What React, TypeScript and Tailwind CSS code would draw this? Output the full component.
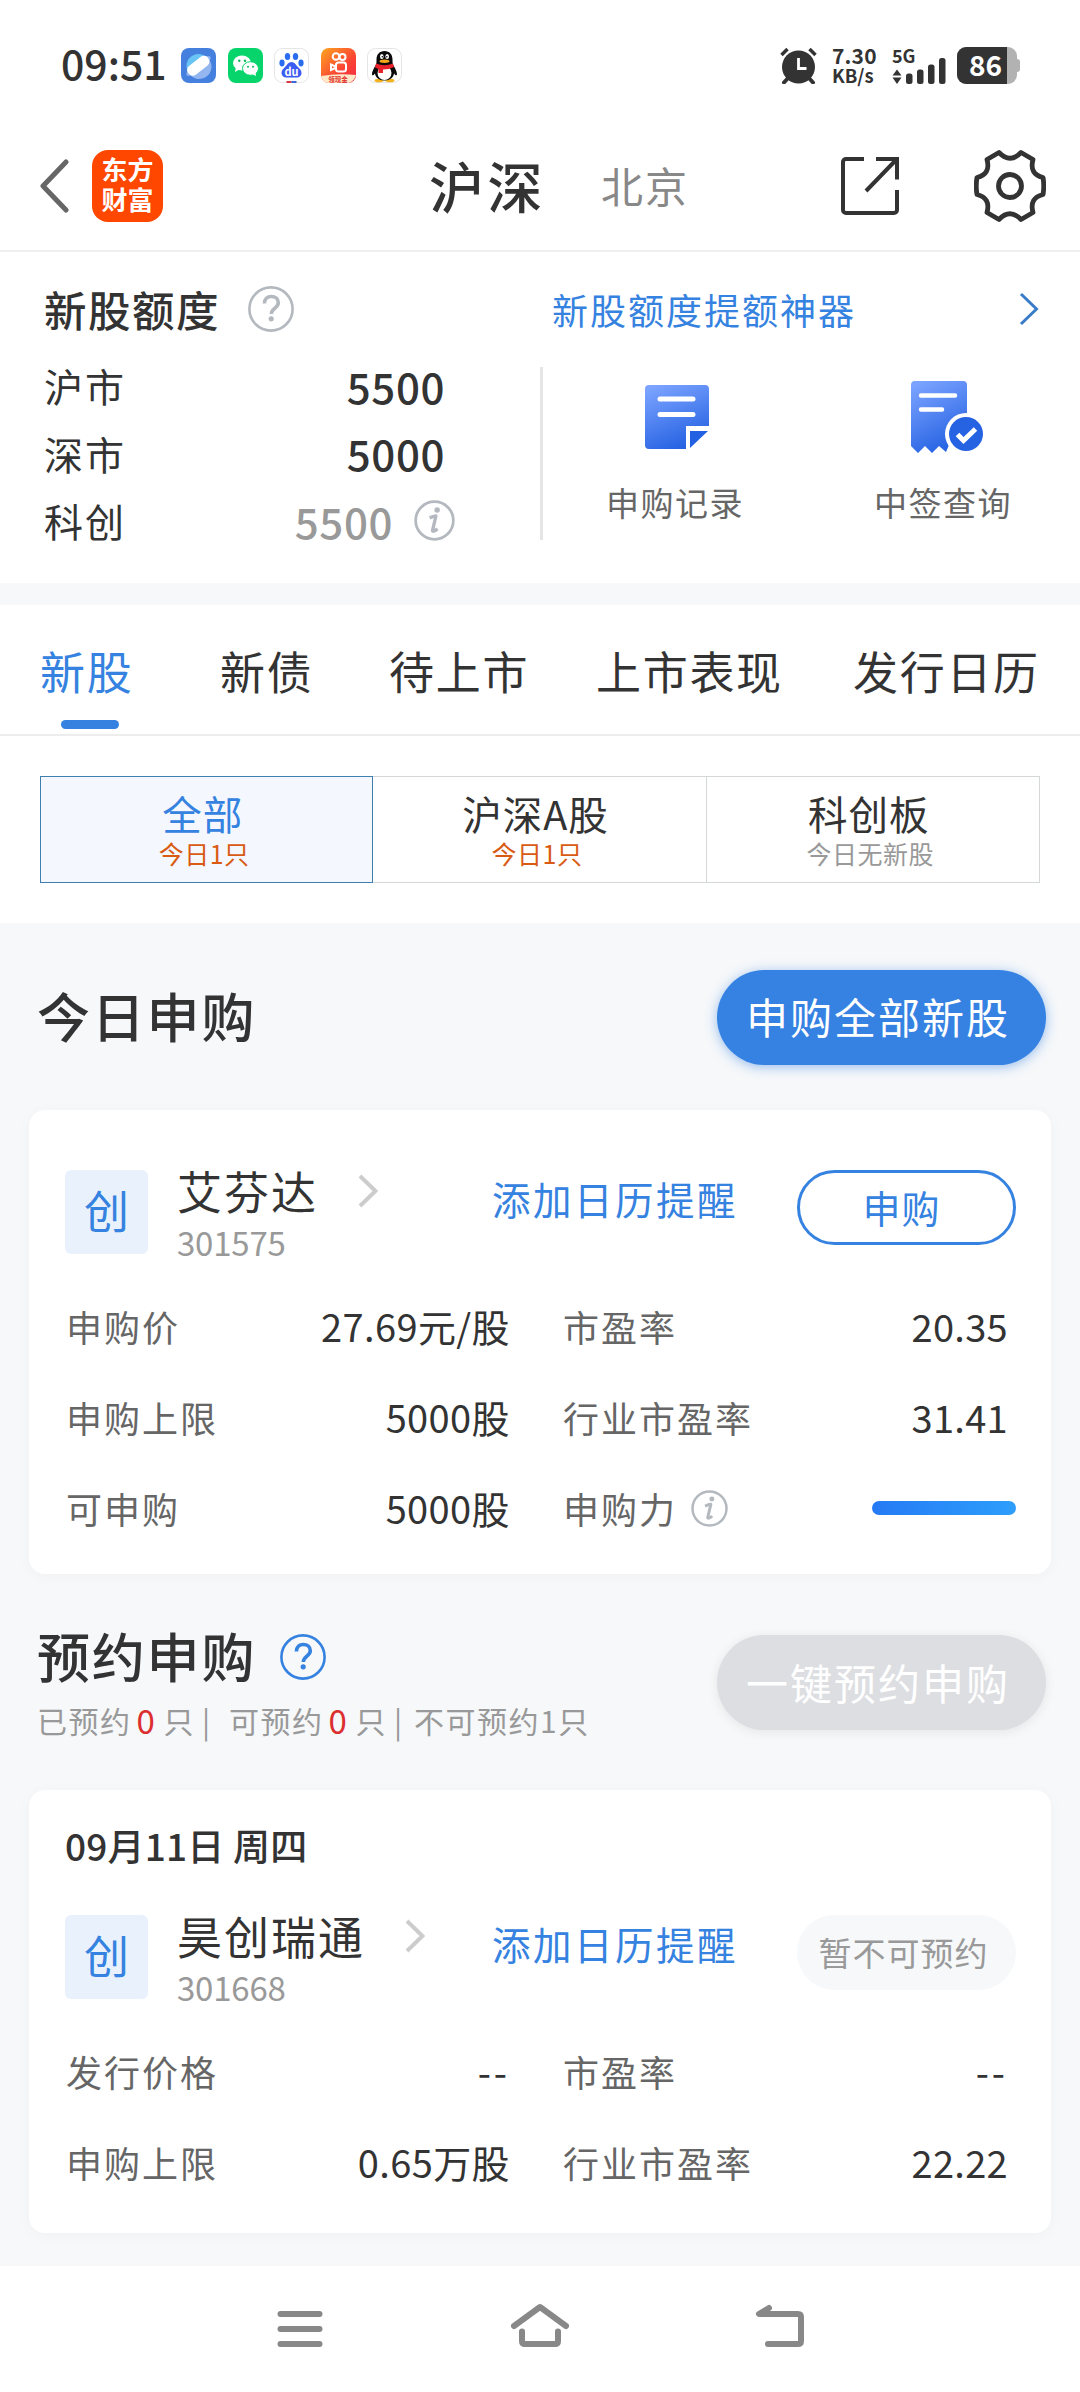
import type { ReactNode } from "react";

type Row = {
  label: string;
  value?: string;
  info?: boolean;
  power?: boolean;
};

const tabs = [
  { name: "新股", pos: "ml-[40px] w-[180px]" },
  { name: "新债", pos: "w-[169px]" },
  { name: "待上市", pos: "w-[207px]" },
  { name: "上市表现", pos: "w-[257px]" },
  { name: "发行日历", pos: "" },
];

const filters = [
  { name: "全部", note: "今日1只", active: true, hot: true },
  { name: "沪深A股", note: "今日1只", active: false, hot: true },
  { name: "科创板", note: "今日无新股", active: false, hot: false },
];

const todayRows: [Row, Row][] = [
  [{ label: "申购价", value: "27.69元/股" }, { label: "市盈率", value: "20.35" }],
  [{ label: "申购上限", value: "5000股" }, { label: "行业市盈率", value: "31.41" }],
  [{ label: "可申购", value: "5000股" }, { label: "申购力", info: true, power: true }],
];

const reserveRows: [Row, Row][] = [
  [{ label: "发行价格", value: "--" }, { label: "市盈率", value: "--" }],
  [{ label: "申购上限", value: "0.65万股" }, { label: "行业市盈率", value: "22.22" }],
];

const InfoIcon = ({ className }: { className: string }) => (
  <svg viewBox="0 0 42 42" className={className} fill="none">
    <circle cx="21" cy="21" r="19.3" stroke="#b4b8bf" strokeWidth="2.8" />
    <circle cx="23.7" cy="10.3" r="2.8" fill="#b4b8bf" />
    <path
      d="M16 18.300c2.500-1 4.500-2 6.500-2L19 31c-.300 1.500 2 1.500 5-1.500"
      stroke="#b4b8bf"
      strokeWidth="3.4"
      strokeLinejoin="round"
    />
  </svg>
);

const HelpIcon = ({ className }: { className: string }) => (
  <svg viewBox="0 0 46 46" className={className} fill="none" stroke="currentColor">
    <circle cx="23" cy="23" r="21.6" strokeWidth="2.6" />
    <path d="M16.4 17.5c0-4.700 2.900-7 6.900-7s7 2.400 7 6.200c0 5.200-7 5.600-7 11.300" strokeWidth="3.6" />
    <circle cx="23.2" cy="32.8" r="2.6" fill="currentColor" stroke="none" />
  </svg>
);

const Chevron = ({ className, width }: { className: string; width: number }) => (
  <svg viewBox="0 0 20 34" className={className} fill="none" stroke="currentColor" strokeWidth={width}>
    <path d="M2 2l15.5 15L2 32" />
  </svg>
);

const AppIcons = () => (
  <div className="ml-[18px] mt-px flex gap-[11.5px]">
    <svg viewBox="0 0 35 35" className="size-[35px]">
      <rect width="35" height="35" rx="8" fill="#4580df" />
      <circle cx="17.5" cy="18" r="12" fill="#69c4f6" />
      <path d="M7.500 24.500a12 12 0 0 0 21.500-11.500z" fill="#94b6f0" />
      <ellipse cx="17.5" cy="18" rx="15" ry="4.5" transform="rotate(-38 17.5 18)" fill="#8eb3f0" />
      <rect x="4.8" y="12.2" width="25" height="11" rx="5" transform="rotate(-38 17.3 17.7)" fill="#fff" />
    </svg>
    <svg viewBox="0 0 35 35" className="size-[35px]">
      <rect width="35" height="35" rx="8" fill="#07d56b" />
      <path d="M8 19l-1 5 5-3z" fill="#fff" />
      <ellipse cx="14" cy="15" rx="9" ry="7.5" fill="#fff" />
      <ellipse cx="22.5" cy="20.5" rx="8" ry="6.8" fill="#fff" stroke="#07d56b" />
      <path d="M24 26l4 2-.5-4z" fill="#fff" />
      <g fill="#08b65c">
        <circle cx="11.3" cy="12.8" r="1.2" />
        <circle cx="17" cy="12.8" r="1.2" />
        <circle cx="20" cy="18.8" r="1" />
        <circle cx="25" cy="18.8" r="1" />
      </g>
    </svg>
    <svg viewBox="0 0 35 35" className="size-[35px]">
      <rect x=".5" y=".5" width="34" height="34" rx="8" fill="#fff" stroke="#e4e4e4" />
      <g fill="#2a6cf0">
        <ellipse cx="8" cy="15" rx="2.6" ry="3.4" />
        <ellipse cx="13.5" cy="8.5" rx="2.7" ry="3.5" />
        <ellipse cx="21.5" cy="8.5" rx="2.7" ry="3.5" />
        <ellipse cx="27" cy="15" rx="2.6" ry="3.4" />
        <path d="M17.5 14c3 0 4.500 3 6.500 5s3.500 3.500 3.500 6-2 4.500-5 4.500h-10c-3 0-5-2-5-4.500s1.500-4 3.500-6 3.500-5 6.500-5z" fill="#3b5cf0" />
      </g>
      <text x="17.5" y="27.5" textAnchor="middle" fontSize="11" fontWeight="700" fill="#fff">du</text>
      <path d="M12.500 33h5v2h-5z" fill="#d33b40" />
      <path d="M17.500 33h5v2h-5z" fill="#3c66d8" />
    </svg>
    <svg viewBox="0 0 35 35" className="size-[35px]">
      <defs>
        <linearGradient id="ks" x1="0" y1="0" x2="1" y2="1">
          <stop offset="0" stopColor="#ffa51f" />
          <stop offset=".6" stopColor="#fb4434" />
          <stop offset="1" stopColor="#f22b45" />
        </linearGradient>
        <clipPath id="ksClip">
          <rect width="35" height="35" rx="8" />
        </clipPath>
      </defs>
      <g clipPath="url(#ksClip)">
        <rect width="35" height="35" fill="url(#ks)" />
        <g fill="none" stroke="#fff" strokeWidth="2">
          <circle cx="15" cy="8.5" r="3.3" />
          <circle cx="21.5" cy="9" r="3" />
          <rect x="15" y="14.5" width="10" height="9" rx="2.5" />
          <path d="M14.500 18.500l-4.500-2v5.500l4.500-2z" />
        </g>
        <path d="M0 28q17-3 35-1-1 5-7 8H0z" fill="#ffe9c9" />
        <text x="17" y="33.5" textAnchor="middle" fontSize="6.5" fontWeight="700" fill="#e0312b">领现金</text>
      </g>
    </svg>
    <svg viewBox="0 0 35 35" className="size-[35px]">
      <rect x=".5" y=".5" width="34" height="34" rx="8" fill="#fff" stroke="#e4e4e4" />
      <ellipse cx="12" cy="32.5" rx="4.5" ry="1.8" fill="#f5b31b" />
      <ellipse cx="23" cy="32.5" rx="4.5" ry="1.8" fill="#f5b31b" />
      <path
        d="M17.500 3c5 0 8 3.500 8 8.500 0 3 0 4 1 6 2 3.500 4 7 3.300 9.500-.600 1-2-.500-2.800-1.500-.500 4-4 7-9.500 7s-9-3-9.500-7c-.800 1-2.200 2.500-2.800 1.500-.700-2.500 1.300-6 3.300-9.500 1-2 1-3 1-6 0-5 3-8.500 8-8.500z"
        fill="#0a0a0a"
      />
      <ellipse cx="17.5" cy="25" rx="7" ry="7" fill="#fff" />
      <path d="M9 15.500q8.500 3.500 17 0l1 3.500q-5 2.500-11 2.500v3.500h-4.500V21l-3.500-1.500z" fill="#e8212b" />
      <ellipse cx="14.8" cy="8.5" rx="1.8" ry="2.6" fill="#fff" />
      <ellipse cx="20.2" cy="8.5" rx="1.8" ry="2.6" fill="#fff" />
      <circle cx="15.3" cy="8.8" r=".8" />
      <circle cx="19.8" cy="8.8" r=".8" />
      <ellipse cx="17.5" cy="13.3" rx="5" ry="1.7" fill="#f5a61b" />
    </svg>
  </div>
);

const StatusBar = () => (
  <div className="flex h-[121px] items-start pt-[47px] text-[#333]">
    <span className="ml-[61px] -mt-px w-[102px] text-[41px] leading-[32px] font-medium">09:51</span>
    <AppIcons />
    <svg viewBox="0 0 37 37" className="ml-[378px] size-[37px]">
      <path d="M1.500 8l6-6M35.500 8l-6-6" stroke="#333" strokeWidth="3.5" />
      <path d="M9 30l-5 5.500M28 30l5 5.500" stroke="#333" strokeWidth="4" strokeLinecap="round" />
      <circle cx="18.5" cy="20" r="16.5" fill="#333" />
      <path d="M18.500 11v10.500h8" fill="none" stroke="#fff" strokeWidth="2.8" />
    </svg>
    <div className="ml-[15px] -mt-[2px] w-[60px] font-bold">
      <div className="text-[21px] leading-[20px] tracking-[0.2px]">7.30</div>
      <div className="text-[18.5px] leading-[20px]">KB/s</div>
    </div>
    <div className="w-[65px]">
      <div className="-mt-px text-[18px] leading-[18px] font-bold">5G</div>
      <svg viewBox="0 0 55 26" className="-mt-[6px] h-[26px] w-[55px]" fill="#333">
        <path d="M5 11.500l4.500 6h-9zM5 26l4.500-6.500h-9z" />
        <rect x="14" y="15.5" width="6.5" height="10.5" rx="2.5" />
        <rect x="25" y="11.5" width="6.500" height="14.5" rx="2.5" />
        <rect x="36" y="6.5" width="6.5" height="19.5" rx="2.5" />
        <rect x="47" y="0" width="6.5" height="26" rx="2.5" />
      </svg>
    </div>
    <div className="flex items-center">
      <div className="flex h-[37px] w-[60px] rounded-[9px] bg-[#b2b2b2]">
        <div className="w-[50px] rounded-l-[9px] bg-[#333] pl-[12px] text-[28px] leading-[34px] font-bold text-white">86</div>
      </div>
      <div className="h-[13px] w-[3px] rounded-r-sm bg-[#b2b2b2]" />
    </div>
  </div>
);

const Header = () => (
  <div className="flex h-[131px] items-center border-b-2 border-[#efefef]">
    <svg
      viewBox="0 0 30 54"
      className="ml-[39px] h-[54px] w-[30px]"
      fill="none"
      stroke="#666"
      strokeWidth="5"
      strokeLinecap="round"
      strokeLinejoin="round"
    >
      <path d="M27 3L4 27l23 24" />
    </svg>
    <div className="ml-[23px] h-[72px] w-[71px] rounded-[16px] bg-[#ff4700] pt-[4px] text-center text-[26px] leading-[30px] font-bold text-white">
      东方
      <br />
      财富
    </div>
    <div className="ml-[266px] -mt-[4px] w-[172px] text-[55px] leading-[60px] font-medium tracking-[3.5px]">沪深</div>
    <div className="-mt-px w-[240px] text-[42px] leading-[50px] tracking-[2px] text-[#888]">北京</div>
    <svg viewBox="0 0 58 58" className="size-[58px] shrink-0" fill="none" stroke="#333" strokeWidth="4">
      <path d="M23 2H5a3 3 0 0 0-3 3v48a3 3 0 0 0 3 3h48a3 3 0 0 0 3-3V33M35 2h21v20.500M55 3L25 34" />
    </svg>
    <svg
      viewBox="-36 -36 72 72"
      className="ml-[75px] size-[72px] shrink-0"
      fill="none"
      stroke="#333"
      strokeWidth="4.8"
      strokeLinejoin="round"
    >
      <path d="M-11-33.500Q0-22 11-33.500L23-26.500Q19-12 33-8.500Q34.500 0 33 8.500Q19 12 23 26.500L11 33.500Q0 22-11 33.500L-23 26.500Q-19 12-33 8.500Q-34.500 0-33-8.500Q-19-12-23-26.500Z" />
      <circle r="11.500" />
    </svg>
  </div>
);

const QuotaRow = ({ name, children }: { name: string; children: ReactNode }) => (
  <div className="flex h-[67.5px] items-center text-[39px]">
    <span className="tracking-[2px]">{name}</span>
    {children}
  </div>
);

const Quota = () => (
  <div className="h-[331px]">
    <div className="flex h-[99px] items-center pt-[15px]">
      <span className="ml-[44px] w-[204px] text-[42.5px] font-medium tracking-[1.5px]">新股额度</span>
      <HelpIcon className="size-[46px] text-[#b4b8bf]" />
      <span className="ml-[258px] w-[467px] text-[36px] tracking-[2px] text-[#3582e0]">新股额度提额神器</span>
      <Chevron width={3} className="h-[34px] w-[20px] text-[#3a7cc8]" />
    </div>
    <div className="flex">
      <div className="w-[497px] pt-px pl-[44px]">
        <QuotaRow name="沪市">
          <span className="ml-auto mr-[52px] text-[42px] font-medium tracking-[0.6px]">5500</span>
        </QuotaRow>
        <QuotaRow name="深市">
          <span className="ml-auto mr-[52px] text-[42px] font-medium tracking-[0.6px]">5000</span>
        </QuotaRow>
        <QuotaRow name="科创">
          <span className="ml-auto mr-[21px] text-[42px] font-medium tracking-[0.6px] text-[#999]">5500</span>
          <InfoIcon className="mr-[42px] size-[41px]" />
        </QuotaRow>
      </div>
      <div className="ml-[43px] mt-[16px] h-[173px] w-[3px] bg-[#e5e5e5]" />
      <div className="flex pt-[30px] text-[33px] tracking-[1.5px] text-[#666]">
        <div className="ml-[63px] flex w-[268px] flex-col">
          <svg viewBox="0 0 72 72" className="ml-[38px] size-[72px]">
            <defs>
              <linearGradient id="doc" x1=".2" y1="0" x2=".6" y2="1">
                <stop offset="0" stopColor="#7ba3ff" />
                <stop offset="1" stopColor="#2461e2" />
              </linearGradient>
            </defs>
            <path d="M5 4h56a4 4 0 0 1 4 4v37H42v23H5a4 4 0 0 1-4-4V8a4 4 0 0 1 4-4z" fill="url(#doc)" />
            <path d="M46 50h18L46 67z" fill="#2461e2" />
            <path d="M16 18h33M16 33.500h33" stroke="#fff" strokeWidth="5" strokeLinecap="round" />
          </svg>
          <span className="mt-[33px]">申购记录</span>
        </div>
        <div className="flex flex-col">
          <svg viewBox="0 0 74 72" className="ml-[36px] h-[72px] w-[74px]">
            <path d="M4 0h49a4 4 0 0 1 4 4v60H39l-3 7-7-6-7 7-7-7-7 7-7-7V4a4 4 0 0 1 3-4z" fill="url(#doc)" />
            <circle cx="56" cy="53" r="21" fill="#fff" />
            <circle cx="56" cy="53" r="17" fill="#2663e2" />
            <path d="M47.500 53.500l6 6L65.500 48" fill="none" stroke="#fff" strokeWidth="5" />
            <path d="M11 14.500h34M11 28.500h21" stroke="#fff" strokeWidth="4.5" strokeLinecap="round" />
          </svg>
          <span className="mt-[33px]">中签查询</span>
        </div>
      </div>
    </div>
  </div>
);

const StockTitle = ({ name, code, children }: { name: string; code: string; children: ReactNode }) => (
  <div className="flex h-[84px] items-start">
    <div className="h-[84px] w-[83px] rounded-md bg-[#e9f2fc] text-center text-[45px] leading-[80px] text-[#3582e0]">创</div>
    <div className="ml-[29px] w-[315px]">
      <div className="-mt-[2px] flex h-[44px] items-center">
        <span className="mr-[40px] text-[45px] leading-none tracking-[2px]">{name}</span>
        <Chevron width={4} className="mt-[2px] h-[34px] w-[20px] text-[#ccc]" />
      </div>
      <div className="mt-[16px] text-[33px] leading-[28px] tracking-[-0.2px] text-[#999]">{code}</div>
    </div>
    <span className="mt-[8px] w-[305px] text-[38.5px] leading-[40px] tracking-[2.5px] text-[#3582e0]">添加日历提醒</span>
    {children}
  </div>
);

const DataRow = ({ row }: { row: [Row, Row] }) => (
  <div className="flex h-[91px] items-center text-[38px]">
    {row.map((cell, i) => (
      <div key={i} className={i === 0 ? "flex w-[445px] items-center pl-px" : "ml-[53px] flex w-[453px] items-center"}>
        <span className="text-[36px] tracking-[2px] text-[#666]">{cell.label}</span>
        {cell.info && <InfoIcon className="ml-[14px] mt-[2px] size-[37px]" />}
        {cell.power ? (
          <div className="ml-auto h-[14px] w-[144px] rounded-full bg-linear-to-r from-[#267af4] to-[#2e9efc]" />
        ) : (
          <span
            className={`ml-auto ${i === 1 ? "mr-[8px]" : ""} ${
              cell.value === "--" ? "tracking-[3px]" : i === 1 ? "tracking-[0.3px]" : "tracking-[0.4px]"
            }`}
          >
            {cell.value}
          </span>
        )}
      </div>
    ))}
  </div>
);

const NavBar = () => (
  <div className="flex h-[126px] items-start bg-white pt-[37px]">
    <svg viewBox="0 0 48 48" className="ml-[276px] size-[48px]" stroke="#888" strokeWidth="6" strokeLinecap="round">
      <path d="M4.500 11h39M4.500 26h39M4.500 41h39" />
    </svg>
    <svg
      viewBox="0 0 60 48"
      className="ml-[186px] h-[48px] w-[60px]"
      fill="none"
      stroke="#888"
      strokeWidth="6"
      strokeLinecap="round"
      strokeLinejoin="round"
    >
      <path d="M4 23L30 4l26 19M12 28.500V38q0 3 3 3h30q3 0 3-3v-9.500" />
    </svg>
    <svg
      viewBox="0 0 50 48"
      className="ml-[185px] h-[48px] w-[50px]"
      fill="none"
      stroke="#888"
      strokeWidth="6"
      strokeLinecap="round"
      strokeLinejoin="round"
    >
      <path d="M14 5L4 11h39q3 0 3 3v24q0 3-3 3H13" />
    </svg>
  </div>
);

const App = () => (
  <div className="h-[2392px] w-[1080px] overflow-hidden bg-[#f6f8fa] font-['Noto_Sans_CJK_SC',sans-serif] leading-none text-[#333]">
    <div className="h-[583px] bg-white">
      <StatusBar />
      <Header />
      <Quota />
    </div>

    <div className="mt-[22px] h-[318px] bg-white">
      <div className="flex h-[131px] items-start border-b-2 border-[#ededed] pt-[43px] text-[45px] tracking-[1.7px]">
        {tabs.map((tab, i) => (
          <div key={tab.name} className={tab.pos}>
            <div className={i === 0 ? "text-[#3582e0]" : ""}>{tab.name}</div>
            {i === 0 && <div className="ml-[21px] mt-[27px] h-[9px] w-[58px] rounded-full bg-[#3582e0]" />}
          </div>
        ))}
      </div>
      <div className="mx-[40px] mt-[40px] grid h-[107px] grid-cols-3">
        {filters.map((f) => (
          <div
            key={f.name}
            className={`flex flex-col items-center border pt-[16px] ${
              f.active ? "border-[#3f7fb0] bg-[#f4f8fe]" : "border-l-0 border-[#d4d7d7]"
            }`}
          >
            <div className={`pr-[8px] text-[39.5px] tracking-[1px] ${f.active ? "text-[#3582e0]" : ""}`}>{f.name}</div>
            <div className={`mt-[8px] pr-[5px] text-[25px] tracking-[0.5px] ${f.hot ? "text-[#d95b13]" : "text-[#999]"}`}>
              {f.note}
            </div>
          </div>
        ))}
      </div>
    </div>

    <div className="flex h-[187px] items-center pt-px pl-[37px]">
      <span className="w-[680px] pb-[4px] text-[53px] font-medium tracking-[1.8px]">今日申购</span>
      <button className="h-[95px] w-[329px] rounded-full bg-[#3582e3] pr-[7px] pb-[2px] text-[42px] tracking-[2px] text-white shadow-[0_2px_12px_rgba(53,130,227,0.5)]">
        申购全部新股
      </button>
    </div>

    <div className="mx-[29px] h-[464px] rounded-2xl bg-white pt-[60px] pl-[36px] shadow-[0_2px_16px_rgba(0,0,0,0.03)]">
      <StockTitle name="艾芬达" code="301575">
        <button className="h-[75px] w-[219px] rounded-full border-3 border-[#3582e0] pr-[10px] pb-[2px] text-[38px] tracking-[1px] text-[#3582e0]">
          申购
        </button>
      </StockTitle>
      <div className="mt-[26px]">
        {todayRows.map((row) => (
          <DataRow key={row[0].label} row={row} />
        ))}
      </div>
    </div>

    <div className="flex h-[216px] items-start pt-[61px] pl-[37px]">
      <div className="w-[680px]">
        <div className="flex h-[46px] items-center">
          <span className="w-[243px] pb-[5px] text-[53px] font-medium tracking-[1.8px]">预约申购</span>
          <HelpIcon className="-mt-[2px] size-[46px] text-[#3582e0]" />
        </div>
        <div className="mt-[22px] flex h-[34px] items-center text-[30px] tracking-[1.5px] text-[#999]">
          <span>已预约</span>
          <span className="mx-[5px] w-[22px] text-[33px] text-[#dc2f2f]">0</span>
          <span>只</span>
          <span className="ml-[7px] w-[27px]">|</span>
          <span>可预约</span>
          <span className="mx-[5px] w-[22px] text-[33px] text-[#dc2f2f]">0</span>
          <span>只</span>
          <span className="ml-[7px] w-[20px]">|</span>
          <span>不可预约1只</span>
        </div>
      </div>
      <button className="h-[95px] w-[329px] rounded-full bg-[#dddee2] pr-[7px] pb-[1px] text-[42px] tracking-[2px] text-white shadow-[0_2px_12px_rgba(0,0,0,0.08)]">
        一键预约申购
      </button>
    </div>

    <div className="mx-[29px] h-[443px] rounded-2xl bg-white pt-[36px] pl-[36px] shadow-[0_2px_16px_rgba(0,0,0,0.03)]">
      <div className="mb-[51px] text-[37px] leading-[38px] font-medium tracking-[0.2px]">09月11日 周四</div>
      <StockTitle name="昊创瑞通" code="301668">
        <button className="h-[75px] w-[219px] rounded-full bg-[#f6f8fa] pr-[6px] text-[33px] tracking-[1px] text-[#999]">
          暂不可预约
        </button>
      </StockTitle>
      <div className="mt-[26px]">
        {reserveRows.map((row) => (
          <DataRow key={row[0].label} row={row} />
        ))}
      </div>
    </div>

    <div className="h-[33px]" />
    <NavBar />
  </div>
);

export default App;
